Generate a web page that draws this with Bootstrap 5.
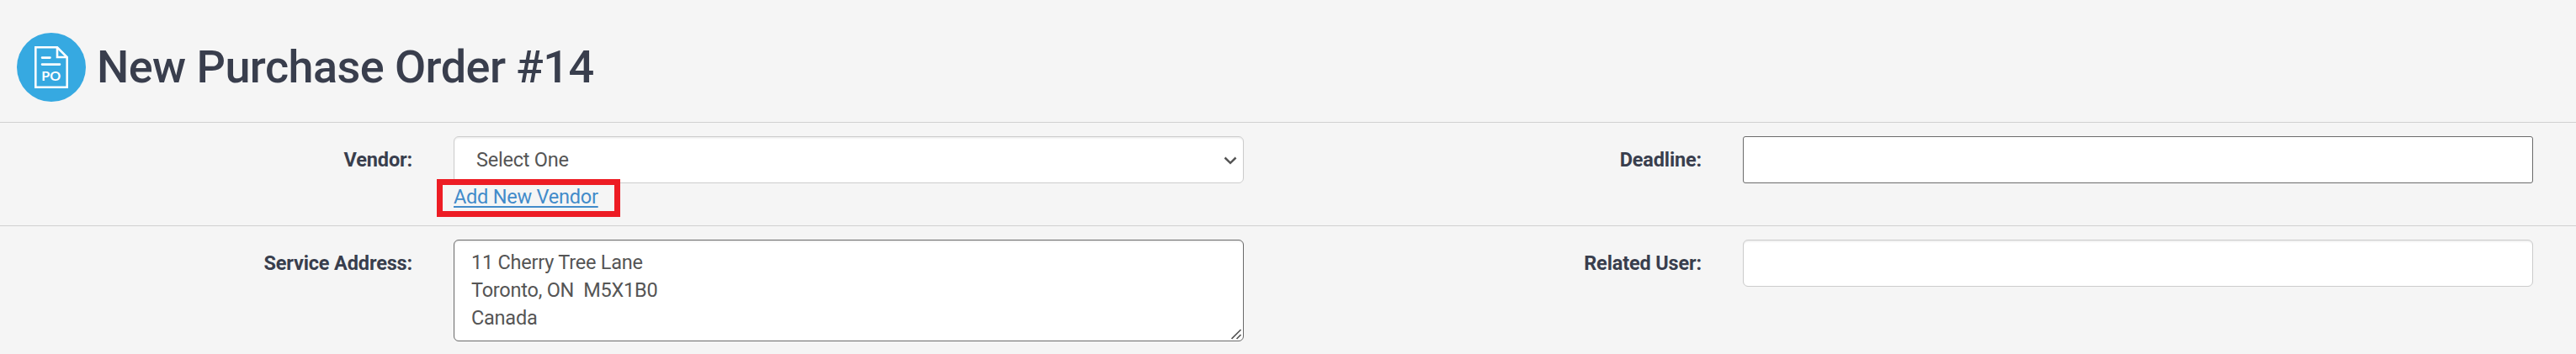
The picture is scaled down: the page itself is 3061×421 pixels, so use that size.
<!DOCTYPE html>
<html lang="en">
<head>
    <meta charset="UTF-8" />
    <meta name="viewport" content="width=device-width, initial-scale=1" />
    <title>New Purchase Order</title>
    <link href="https://cdn.jsdelivr.net/npm/bootstrap@5.3.2/dist/css/bootstrap.min.css" rel="stylesheet" />
    <style>
        body {
            background: #f5f5f5;
            color: #393e4d;
            font-family: Roboto, "Liberation Sans", sans-serif;
            font-size: 23.5px;
            letter-spacing: -.23px;
            line-height: 33px;
            overflow: hidden;
        }

        .page-head {
            height: 145px;
            padding: 15px 0 0 20px;
            gap: 12px;
        }

        .page-head h1 {
            margin: 33px 0 0;
            font-size: 54px;
            font-weight: 500;
            letter-spacing: -.56px;
            line-height: 64px;
        }

        .po-row {
            border-top: 1px solid #d0d0d0;
            padding-top: 16px;
        }

        .po-row-vendor {
            height: 123px;
        }

        .po-row-address {
            height: 153px;
        }

        .po-field {
            flex: 0 0 1532px;
            gap: 49px;
        }

        .po-field > label {
            width: 490px;
            padding-top: 12px;
            font-weight: 700;
            letter-spacing: -.15px;
            text-align: right;
        }

        .po-control {
            width: 939px;
        }

        .po-control .form-control,
        .po-control .form-select {
            height: 56px;
            border: 1px solid #ccc;
            border-radius: 6px;
            box-shadow: inset 0 1.5px 1.5px rgba(0, 0, 0, .075);
            color: #555;
            font-size: 23.5px;
            letter-spacing: -.23px;
            line-height: 33px;
        }

        .po-control .form-select {
            padding: 10px 50px 10px 26px;
            background-image: url("data:image/svg+xml,%3Csvg xmlns='http://www.w3.org/2000/svg' viewBox='0 0 16 10'%3E%3Cpath d='M1.5 1.5 8 7.8l6.500-6.300' fill='none' stroke='%23555' stroke-width='2.500'/%3E%3C/svg%3E");
            background-position: right 7px top 23px;
            background-size: 16px 10px;
        }

        .po-control .deadline-input {
            border-color: #6b6b6b;
            border-radius: 3px;
            box-shadow: none;
        }

        .po-control textarea.form-control {
            display: block;
            height: 121px;
            padding: 10px 20px;
            border-color: #6b6b6b;
            overflow: hidden;
            resize: none;
        }

        .resize-grip {
            right: 2px;
            bottom: 2px;
        }

        .vendor-link {
            color: #428bca;
            text-decoration: underline;
            text-decoration-thickness: 2px;
            text-underline-offset: 3px;
        }

        .vendor-highlight {
            left: -20px;
            top: 51px;
            width: 218px;
            height: 45px;
            border: 7px solid #ed1c24;
            pointer-events: none;
        }
    </style>
</head>
<body>
    <header class="page-head d-flex align-items-start">
        <svg class="flex-shrink-0 mt-4" width="83" height="82" viewBox="0 0 83 82">
            <circle cx="41" cy="41" r="41" fill="#36a9e1" />
            <g fill="none" stroke="#fff" stroke-width="2.600">
                <path d="M22.300 17.300H48L59.700 29V64.700H22.300Z" />
                <path d="M48 17.300V29H59.700" />
                <path d="M30 29.600H39.500M30 37.600H51" stroke-linecap="round" />
            </g>
            <text x="29.300" y="57.300" fill="#fff" font-family="Lato, sans-serif" font-size="16" font-weight="700" letter-spacing="0">PO</text>
        </svg>
        <h1>New Purchase Order #14</h1>
    </header>

    <form>
        <div class="po-row po-row-vendor d-flex">
            <div class="po-field d-flex align-items-start">
                <label for="vendor">Vendor:</label>
                <div class="po-control position-relative">
                    <select class="form-select" id="vendor">
                        <option>Select One</option>
                    </select>
                    <a class="vendor-link" href="#">Add New Vendor</a>
                    <div class="vendor-highlight position-absolute"></div>
                </div>
            </div>
            <div class="po-field d-flex align-items-start">
                <label for="deadline">Deadline:</label>
                <div class="po-control">
                    <input type="text" class="form-control deadline-input" id="deadline" />
                </div>
            </div>
        </div>

        <div class="po-row po-row-address d-flex">
            <div class="po-field d-flex align-items-start">
                <label for="address">Service Address:</label>
                <div class="po-control position-relative">
                    <textarea class="form-control" id="address">11 Cherry Tree Lane
Toronto, ON  M5X1B0
Canada</textarea>
                    <svg class="resize-grip position-absolute" width="13" height="13" viewBox="0 0 13 13">
                        <path d="M.5 12 11.500 1M6.500 12l5-5" fill="none" stroke="#555" stroke-width="1.700" />
                    </svg>
                </div>
            </div>
            <div class="po-field d-flex align-items-start">
                <label for="relatedUser">Related User:</label>
                <div class="po-control">
                    <input type="text" class="form-control" id="relatedUser" />
                </div>
            </div>
        </div>
    </form>

    <script src="https://cdn.jsdelivr.net/npm/bootstrap@5.3.2/dist/js/bootstrap.bundle.min.js"></script>
</body>
</html>
